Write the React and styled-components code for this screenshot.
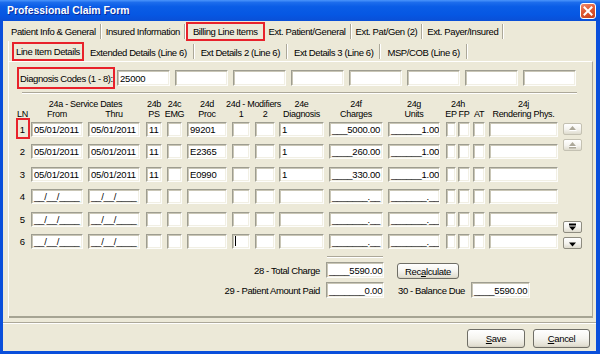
import React from 'react';
import styled, { createGlobalStyle } from 'styled-components';

const GlobalStyle = createGlobalStyle`
  html, body {
    margin: 0;
    padding: 0;
    background: #ffffff;
  }
  body {
    font-family: "Liberation Sans", Arial, sans-serif;
    color: #000;
  }
`;

const RED = '#e8222b';

// column widths taken from the form: field width + space to the next field
const cols = [
    { w: 15, g: 0 }, // LN
    { w: 52, g: 5 }, // from
    { w: 52, g: 6 }, // thru
    { w: 16, g: 5 }, // ps
    { w: 15, g: 5 }, // emg
    { w: 40, g: 5 }, // proc
    { w: 18, g: 5 }, // mod 1
    { w: 20, g: 4 }, // mod 2
    { w: 45, g: 5 }, // diagnosis
    { w: 54, g: 5 }, // charges
    { w: 52, g: 6 }, // units
    { w: 10, g: 2 }, // ep
    { w: 12, g: 3 }, // fp
    { w: 12, g: 4 }, // at
    { w: 69, g: 5 }, // rendering phys
    { w: 19, g: 0 }, // arrows
];
const gridTemplate = cols.map(c => `${c.w + c.g}px`).join(' ');

const Window = styled.div`
    width: 600px;
    height: 354px;
    box-sizing: border-box;
    display: flex;
    flex-direction: column;
    background: #0a4fdb;
    overflow: hidden;
`;

const TitleBar = styled.div`
    height: 21px;
    flex: none;
    display: flex;
    align-items: center;
    justify-content: space-between;
    padding: 0 4px 0 7px;
    background: linear-gradient(180deg, #4b95fb 0%, #1c6cec 12%, #0a5de6 32%, #0657e3 70%, #0a4fd6 100%);
`;

const Title = styled.span`
    color: #fff;
    font-weight: bold;
    font-size: 10.4px;
    text-shadow: 1px 1px 0 #0b2a9a;
    white-space: nowrap;
`;

const CloseButton = styled.div`
    width: 16px;
    height: 16px;
    box-sizing: border-box;
    border: 1px solid #fff;
    border-radius: 3px;
    background: linear-gradient(160deg, #f08a6e 0%, #e05a34 45%, #c8401c 100%);
    display: flex;
    align-items: center;
    justify-content: center;
`;

const Frame = styled.div`
    flex: 1;
    min-height: 0;
    margin: 0 4px 3px 3px;
    background: #ece9d8;
    display: flex;
    flex-direction: column;
`;

const TabStrip = styled.div`
    height: 20px;
    flex: none;
    display: flex;
    align-items: ${p => p.$align || 'center'};
    padding-left: ${p => p.$indent}px;
`;

const Tab = styled.div`
    box-sizing: border-box;
    height: ${p => (p.$active ? 19 : 17)}px;
    display: flex;
    align-items: center;
    padding: 0 ${p => p.$pad}px;
    border: 2px solid ${p => (p.$active ? RED : 'transparent')};
    font-size: 9.5px;
    letter-spacing: -0.4px;
    white-space: nowrap;
`;

const TabSep = styled.div`
    width: 1px;
    height: 15px;
    background: #aca899;
    border-right: 1px solid #fff;
    align-self: center;
`;

const Sheet = styled.div`
    flex: none;
    height: 277px;
    margin: 0 3px 0 5px;
    border-left: 1px solid #fff;
    display: flex;
    flex-direction: column;
`;

const InnerPanel = styled.div`
    flex: 1;
    border-top: 1px solid #fff;
    border-right: 1px solid #aca899;
    border-bottom: 2px solid #a6a493;
    padding-left: 7px;
    display: flex;
    flex-direction: column;
`;

const DiagRow = styled.div`
    margin: 5px 0 0 1px;
    height: 22px;
    display: flex;
    align-items: center;
    gap: 5px;
`;

const DiagLabel = styled.div`
    box-sizing: border-box;
    width: 98px;
    height: 22px;
    margin-right: -3px;
    border: 2px solid ${RED};
    display: flex;
    align-items: center;
    padding-left: 1px;
    font-size: 9.5px;
    letter-spacing: -0.4px;
    white-space: nowrap;
`;

const Rule = styled.div`
    margin: ${p => p.$mt || 0}px 0 0 ${p => p.$ml || 0}px;
    width: ${p => p.$w}px;
    height: 1px;
    background: #aca899;
    border-bottom: 1px solid #fff;
`;

const HeaderGrid = styled.div`
    margin-top: 5px;
    display: grid;
    grid-template-columns: ${gridTemplate};
    grid-template-rows: 10px 10px;
    font-size: 9px;
    letter-spacing: -0.3px;
`;

const HeadCell = styled.div`
    grid-column: ${p => p.$col} / span ${p => p.$span || 1};
    grid-row: ${p => p.$row};
    padding-right: ${p => p.$gap}px;
    display: flex;
    justify-content: center;
    align-items: center;
    line-height: 10px;
    white-space: nowrap;
`;

const RowsGrid = styled.div`
    margin-top: 3px;
    display: grid;
    grid-template-columns: ${gridTemplate};
    grid-template-rows: repeat(6, 22.4px);
`;

const Cell = styled.div`
    padding-right: ${p => p.$gap}px;
`;

const LnCell = styled.div`
    position: relative;
    height: 15px;
    display: flex;
    align-items: center;
    justify-content: center;
    padding-right: 2px;
    font-size: 9.5px;

    &::after {
        content: '';
        display: ${p => (p.$marked ? 'block' : 'none')};
        position: absolute;
        left: 0;
        right: 1px;
        top: -4px;
        bottom: -2px;
        border: 2px solid ${RED};
    }
`;

const Field = styled.div`
    box-sizing: border-box;
    width: ${p => (p.$w ? `${p.$w}px` : '100%')};
    height: ${p => p.$h || 15}px;
    flex: none;
    background: #fff;
    border-style: solid;
    border-width: 1px;
    border-color: #9e9d90 #fdfdfb #fdfdfb #9e9d90;
    box-shadow: inset 1px 1px 0 #c9c6b6, inset -1px -1px 0 #f1efe4;
    padding-left: 2px;
    display: flex;
    align-items: center;
    font-size: 9.5px;
    letter-spacing: -0.2px;
    white-space: nowrap;
    overflow: hidden;
`;

const Caret = styled.span`
    display: block;
    width: 1px;
    height: 10px;
    background: #000;
`;

const ArrowColumn = styled.div`
    grid-column: 16;
    grid-row: 1 / span 6;
    display: flex;
    flex-direction: column;
    justify-content: space-between;
    padding: 1px 0 7px;
`;

const ArrowGroup = styled.div`
    display: flex;
    flex-direction: column;
    gap: 4px;
`;

const ArrowButton = styled.div`
    box-sizing: border-box;
    width: 19px;
    height: 12px;
    border: 1px solid ${p => (p.$disabled ? '#c4c1b2' : '#8e8c80')};
    border-radius: 2px;
    background: linear-gradient(180deg, #ffffff 0%, #f4f3ee 55%, #dedbcd 100%);
    display: flex;
    align-items: center;
    justify-content: center;
`;

const Totals = styled.div`
    margin-top: 4px;
    display: flex;
    flex-direction: column;
    gap: 3px;
`;

const TotalRow = styled.div`
    display: flex;
    align-items: flex-start;
    height: ${p => p.$h}px;
`;

const Label = styled.div`
    width: ${p => (p.$w ? `${p.$w}px` : 'auto')};
    margin: 0 ${p => p.$mr || 0}px 0 ${p => p.$ml || 0}px;
    height: 16px;
    display: flex;
    align-items: center;
    justify-content: ${p => (p.$right ? 'flex-end' : 'flex-start')};
    font-size: 9.5px;
    letter-spacing: -0.4px;
    white-space: nowrap;
`;

const XpButton = styled.div`
    box-sizing: border-box;
    width: ${p => p.$w}px;
    height: ${p => p.$h}px;
    margin: ${p => p.$mt || 0}px 0 0 ${p => p.$ml || 0}px;
    border: 1px solid #6f6e66;
    border-radius: 3px;
    background: linear-gradient(180deg, #ffffff 0%, #f5f4ef 50%, #e3e0d3 90%, #d4d0c1 100%);
    display: flex;
    align-items: center;
    justify-content: center;
    font-size: 9.5px;
    letter-spacing: -0.35px;
    white-space: nowrap;

    u {
        text-decoration: underline;
        text-underline-offset: 1px;
    }
`;

const FooterRule = styled.div`
    margin-top: 4px;
    height: 1px;
    background: #aca899;
    border-bottom: 1px solid #fff;
`;

const Footer = styled.div`
    display: flex;
    justify-content: flex-end;
    gap: 8px;
    padding: 5px 6px 0 0;
`;

const UpIcon = ({ bar, disabled }) => {
    const c = disabled ? '#aca899' : '#000';
    return (
        <svg width="9" height="8" viewBox="0 0 9 8">
            {disabled && <polygon points="5,2 9,6 1,6" fill="#fff" />}
            <polygon points="4.5,1 8,5 1,5" fill={c} />
            {bar && <rect x="1" y="6" width="7" height="1.5" fill={c} />}
        </svg>
    );
};

const DownIcon = ({ bar }) => (
    <svg width="9" height="8" viewBox="0 0 9 8">
        {bar && <rect x="1" y="0.5" width="7" height="2" fill="#000" />}
        <polygon points="1,3.5 8,3.5 4.5,7.5" fill="#000" />
    </svg>
);

const topTabs = [
    { label: 'Patient Info & General' },
    { label: 'Insured Information' },
    { label: 'Billing Line Items', active: true },
    { label: 'Ext. Patient/General' },
    { label: 'Ext. Pat/Gen (2)' },
    { label: 'Ext. Payer/Insured' },
];

const innerTabs = [
    { label: 'Line Item Details', active: true },
    { label: 'Extended Details (Line 6)' },
    { label: 'Ext Details 2 (Line 6)' },
    { label: 'Ext Details 3 (Line 6)' },
    { label: 'MSP/COB (Line 6)' },
];

const diagnosisCodes = ['25000', '', '', '', '', '', '', ''];

const emptyDate = '__/__/____';
const emptyMoney = '_______.__';

const lines = [
    { ln: 1, from: '05/01/2011', thru: '05/01/2011', ps: '11', proc: '99201', diag: '1', charges: '___5000.00', units: '______1.00' },
    { ln: 2, from: '05/01/2011', thru: '05/01/2011', ps: '11', proc: 'E2365', diag: '1', charges: '____260.00', units: '______1.00' },
    { ln: 3, from: '05/01/2011', thru: '05/01/2011', ps: '11', proc: 'E0990', diag: '1', charges: '____330.00', units: '______1.00' },
    { ln: 4, from: emptyDate, thru: emptyDate, charges: emptyMoney, units: emptyMoney },
    { ln: 5, from: emptyDate, thru: emptyDate, charges: emptyMoney, units: emptyMoney },
    { ln: 6, from: emptyDate, thru: emptyDate, charges: emptyMoney, units: emptyMoney, caret: true },
];

const fieldKeys = ['from', 'thru', 'ps', 'emg', 'proc', 'mod1', 'mod2', 'diag', 'charges', 'units', 'ep', 'fp', 'at', 'rend'];

const Tabs = ({ items, pad, activePad, indent, align }) => (
    <TabStrip $indent={indent} $align={align}>
        {items.map(t => (
            <React.Fragment key={t.label}>
                <Tab $active={t.active} $pad={t.active ? activePad : pad}>{t.label}</Tab>
                {!t.active && <TabSep />}
            </React.Fragment>
        ))}
    </TabStrip>
);

const Header = () => (
    <HeaderGrid>
        <HeadCell $row={1} $col={2} $span={2} $gap={6}>24a - Service Dates</HeadCell>
        <HeadCell $row={1} $col={4} $gap={5}>24b</HeadCell>
        <HeadCell $row={1} $col={5} $gap={5}>24c</HeadCell>
        <HeadCell $row={1} $col={6} $gap={5}>24d</HeadCell>
        <HeadCell $row={1} $col={7} $span={2} $gap={4}>24d - Modifiers</HeadCell>
        <HeadCell $row={1} $col={9} $gap={5}>24e</HeadCell>
        <HeadCell $row={1} $col={10} $gap={5}>24f</HeadCell>
        <HeadCell $row={1} $col={11} $gap={6}>24g</HeadCell>
        <HeadCell $row={1} $col={12} $span={2} $gap={3}>24h</HeadCell>
        <HeadCell $row={1} $col={15} $gap={5}>24j</HeadCell>

        <HeadCell $row={2} $col={1} $gap={2}>LN</HeadCell>
        <HeadCell $row={2} $col={2} $gap={5}>From</HeadCell>
        <HeadCell $row={2} $col={3} $gap={6}>Thru</HeadCell>
        <HeadCell $row={2} $col={4} $gap={5}>PS</HeadCell>
        <HeadCell $row={2} $col={5} $gap={5}>EMG</HeadCell>
        <HeadCell $row={2} $col={6} $gap={5}>Proc</HeadCell>
        <HeadCell $row={2} $col={7} $gap={5}>1</HeadCell>
        <HeadCell $row={2} $col={8} $gap={4}>2</HeadCell>
        <HeadCell $row={2} $col={9} $gap={5}>Diagnosis</HeadCell>
        <HeadCell $row={2} $col={10} $gap={5}>Charges</HeadCell>
        <HeadCell $row={2} $col={11} $gap={6}>Units</HeadCell>
        <HeadCell $row={2} $col={12} $gap={2}>EP</HeadCell>
        <HeadCell $row={2} $col={13} $gap={3}>FP</HeadCell>
        <HeadCell $row={2} $col={14} $gap={4}>AT</HeadCell>
        <HeadCell $row={2} $col={15} $gap={5}>Rendering Phys.</HeadCell>
    </HeaderGrid>
);

const LineRows = () => (
    <RowsGrid>
        {lines.map(line => (
            <React.Fragment key={line.ln}>
                <LnCell $marked={line.ln === 1}>{line.ln}</LnCell>
                {fieldKeys.map((key, i) => (
                    <Cell key={key} $gap={cols[i + 1].g}>
                        <Field>
                            {key === 'mod1' && line.caret ? <Caret /> : line[key] || ''}
                        </Field>
                    </Cell>
                ))}
            </React.Fragment>
        ))}
        <ArrowColumn>
            <ArrowGroup>
                <ArrowButton $disabled><UpIcon disabled /></ArrowButton>
                <ArrowButton $disabled><UpIcon disabled bar /></ArrowButton>
            </ArrowGroup>
            <ArrowGroup>
                <ArrowButton><DownIcon bar /></ArrowButton>
                <ArrowButton><DownIcon /></ArrowButton>
            </ArrowGroup>
        </ArrowColumn>
    </RowsGrid>
);

const App = () => (
    <>
        <GlobalStyle />
        <Window>
            <TitleBar>
                <Title>Professional Claim Form</Title>
                <CloseButton>
                    <svg width="10" height="10" viewBox="0 0 10 10">
                        <path d="M1.5 1.5 L8.5 8.5 M8.5 1.5 L1.5 8.5" stroke="#fff" strokeWidth="2" strokeLinecap="square" />
                    </svg>
                </CloseButton>
            </TitleBar>
            <Frame>
                <Tabs items={topTabs} pad={2} activePad={5} indent={4} />
                <Sheet>
                    <Tabs items={innerTabs} pad={4} activePad={2} indent={3} align="flex-end" />
                    <InnerPanel>
                        <DiagRow>
                            <DiagLabel>Diagnosis Codes (1 - 8):</DiagLabel>
                            {diagnosisCodes.map((code, i) => (
                                <Field key={i} $w={53} $h={16}>{code}</Field>
                            ))}
                        </DiagRow>
                        <Rule $mt={3} $ml={6} $w={555} />
                        <Header />
                        <LineRows />
                        <Rule $ml={311} $w={56} />
                        <Totals>
                            <TotalRow $h={17}>
                                <Label $w={304} $mr={6} $right>28 - Total Charge</Label>
                                <Field $w={58} $h={16}>____5590.00</Field>
                                <XpButton $w={62} $h={16} $ml={13} $mt={1}>Rec<u>a</u>lculate</XpButton>
                            </TotalRow>
                            <TotalRow $h={16}>
                                <Label $w={304} $mr={6} $right>29 - Patient Amount Paid</Label>
                                <Field $w={58} $h={16}>_______0.00</Field>
                                <Label $ml={14} $mr={6}>30 - Balance Due</Label>
                                <Field $w={59} $h={16}>____5590.00</Field>
                            </TotalRow>
                        </Totals>
                    </InnerPanel>
                </Sheet>
                <FooterRule />
                <Footer>
                    <XpButton $w={58} $h={19}><u>S</u>ave</XpButton>
                    <XpButton $w={57} $h={19}><u>C</u>ancel</XpButton>
                </Footer>
            </Frame>
        </Window>
    </>
);

export default App;
